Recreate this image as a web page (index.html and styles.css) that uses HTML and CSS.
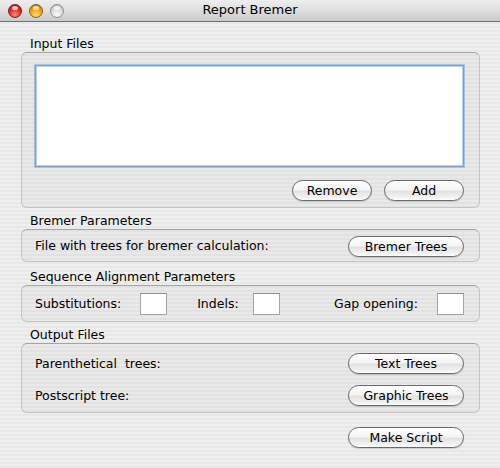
FILE: index.html
```html
<!DOCTYPE html>
<html>
<head>
<meta charset="utf-8">
<link rel="stylesheet" href="styles.css">
</head>
<body>
<div class="window">
  <div class="titlebar">
    <div class="lights">
      <span class="light red"></span>
      <span class="light yellow"></span>
      <span class="light gray"></span>
    </div>
    <div class="title">Report Bremer</div>
  </div>
  <div class="content">
    <div class="glabel first">Input Files</div>
    <div class="group input-group">
      <div class="textarea"></div>
      <div class="btnrow">
        <button class="btn w80">Remove</button>
        <button class="btn w80">Add</button>
      </div>
    </div>

    <div class="glabel g2">Bremer Parameters</div>
    <div class="group row-group bremer">
      <span class="lbl">File with trees for bremer calculation:</span>
      <button class="btn w116">Bremer Trees</button>
    </div>

    <div class="glabel g3">Sequence Alignment Parameters</div>
    <div class="group seq">
      <span class="lbl">Substitutions:</span>
      <span class="field f1"></span>
      <span class="lbl l2">Indels:</span>
      <span class="field f2"></span>
      <span class="lbl l3">Gap opening:</span>
      <span class="field f3"></span>
    </div>

    <div class="glabel g4">Output Files</div>
    <div class="group out">
      <div class="outrow">
        <span class="lbl">Parenthetical&nbsp; trees:</span>
        <button class="btn w116">Text Trees</button>
      </div>
      <div class="outrow r2">
        <span class="lbl">Postscript tree:</span>
        <button class="btn w116">Graphic Trees</button>
      </div>
    </div>

    <div class="footer">
      <button class="btn w116">Make Script</button>
    </div>
  </div>
</div>
</body>
</html>
```

FILE: styles.css
```css
* { box-sizing: border-box; }
html, body { margin: 0; padding: 0; }
body {
  width: 500px;
  height: 468px;
  overflow: hidden;
  font-family: "DejaVu Sans", "Liberation Sans", sans-serif;
  font-size: 12.5px;
  color: #000;
}
.window {
  width: 500px;
  height: 468px;
  background: repeating-linear-gradient(to bottom, #efefef 0px, #efefef 2px, #e8e8e8 2px, #e8e8e8 4px);
}
.titlebar {
  position: relative;
  height: 22px;
  border-bottom: 1px solid #6f6f6f;
  background: linear-gradient(to bottom, #eeeeee 0%, #dedede 50%, #cacaca 100%);
  display: flex;
  align-items: center;
  justify-content: center;
}
.lights {
  position: absolute;
  left: 8px;
  top: 4px;
  display: flex;
  gap: 7px;
}
.light {
  position: relative;
  width: 14px;
  height: 14px;
  border-radius: 50%;
  display: block;
}
.light::after {
  content: "";
  position: absolute;
  left: 3px;
  top: 1px;
  width: 6px;
  height: 4px;
  border-radius: 50%;
  background: rgba(255, 255, 255, 0.7);
}
.red {
  background: radial-gradient(circle at 50% 80%, #ff8c7c 0%, #e0302a 50%, #9c1010 100%);
  border: 1px solid #7e1a1a;
}
.yellow {
  background: radial-gradient(circle at 50% 80%, #ffe27a 0%, #f5a017 50%, #b06204 100%);
  border: 1px solid #935d12;
}
.gray {
  background: radial-gradient(circle at 50% 80%, #fafafa 0%, #dcdcdc 50%, #ababab 100%);
  border: 1px solid #909090;
}
.title {
  font-size: 13px;
  line-height: 16px;
  margin-top: -1px;
}
.content {
  padding: 0 20px 0 21px;
}
.glabel {
  height: 16px;
  line-height: 16px;
  padding-left: 9px;
}
.glabel.first { margin-top: 14px; }
.glabel.g2 { margin-top: 5px; }
.glabel.g3 { margin-top: 7px; }
.glabel.g4 { margin-top: 5px; }
.group {
  border: 1px solid #c4c4c4;
  border-top-color: #a4a4a4;
  border-radius: 6px;
  background: rgba(0, 0, 0, 0.025);
}
.input-group {
  height: 156px;
  padding: 12px 15px 0 13px;
}
.textarea {
  height: 102px;
  background: #fff;
  border: 1px solid #7f9fc6;
  box-shadow: 0 0 0 1px #a7c3e2, inset 0 0 0 1px #b9d0ea;
}
.btnrow {
  margin-top: 13px;
  display: flex;
  justify-content: flex-end;
  gap: 12px;
}
.btn {
  font-family: inherit;
  font-size: 12.5px;
  color: #000;
  height: 21px;
  padding: 0;
  border: 1px solid #6a6a6a;
  border-radius: 11px;
  background: linear-gradient(to bottom, #ffffff 0%, #f4f4f4 45%, #e2e2e2 55%, #f2f2f2 85%, #ffffff 100%);
  box-shadow: 0 1px 1px rgba(0,0,0,0.15);
  line-height: 19px;
  text-align: center;
}
.w80 { width: 80px; }
.w116 { width: 116px; }
.lbl { line-height: 16px; }
.row-group {
  height: 33px;
  display: flex;
  align-items: center;
  justify-content: space-between;
  padding: 1px 15px 0 13px;
}
.seq {
  height: 37px;
  display: flex;
  align-items: center;
  padding: 1px 15px 0 13px;
}
.field {
  width: 27px;
  height: 22px;
  background: #fff;
  border: 1px solid #a5a5a5;
  border-top-color: #8e8e8e;
  display: block;
}
.f1 { margin-left: 19px; }
.l2 { margin-left: 30px; }
.f2 { margin-left: 14px; }
.l3 { margin-left: auto; }
.f3 { margin-left: 19px; }
.out {
  height: 70px;
  padding: 9px 15px 0 13px;
}
.outrow {
  display: flex;
  align-items: center;
  justify-content: space-between;
  height: 21px;
}
.outrow.r2 { margin-top: 11px; }
.footer {
  margin-top: 14px;
  display: flex;
  justify-content: flex-end;
  padding-right: 16px;
}
```
